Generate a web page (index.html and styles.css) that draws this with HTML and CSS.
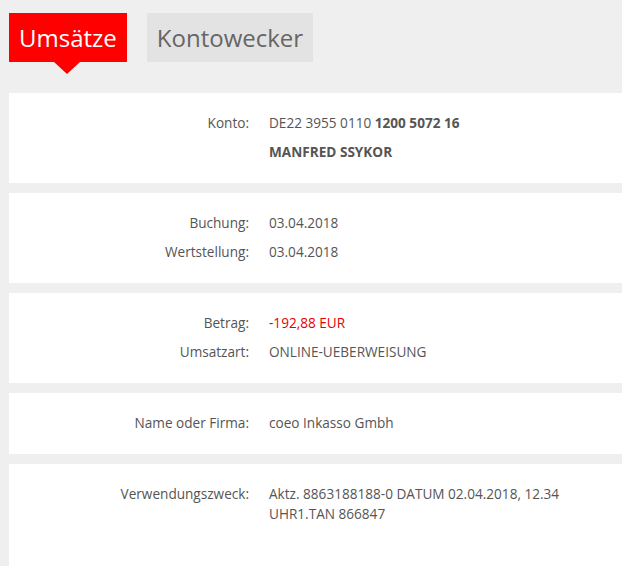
FILE: index.html
```html
<!DOCTYPE html>
<html lang="de">
  <head>
    <meta charset="UTF-8" />
    <title>Umsätze</title>
    <link rel="stylesheet" href="styles.css">
  </head>
  <body>
    <nav class="tabs">
      <a href="#" class="tab active">Umsätze</a>
      <a href="#" class="tab">Kontowecker</a>
    </nav>

    <div class="details">
      <section class="card">
        <div class="row">
          <span class="label">Konto:</span>
          <span class="value">DE22 3955 0110 <b>1200 5072 16</b></span>
        </div>
        <div class="row">
          <span class="label"></span>
          <span class="value"><b>MANFRED SSYKOR</b></span>
        </div>
      </section>

      <section class="card">
        <div class="row">
          <span class="label">Buchung:</span>
          <span class="value">03.04.2018</span>
        </div>
        <div class="row">
          <span class="label">Wertstellung:</span>
          <span class="value">03.04.2018</span>
        </div>
      </section>

      <section class="card">
        <div class="row">
          <span class="label">Betrag:</span>
          <span class="value negative">-192,88 EUR</span>
        </div>
        <div class="row">
          <span class="label">Umsatzart:</span>
          <span class="value">ONLINE-UEBERWEISUNG</span>
        </div>
      </section>

      <section class="card">
        <div class="row">
          <span class="label">Name oder Firma:</span>
          <span class="value">coeo Inkasso Gmbh</span>
        </div>
      </section>

      <section class="card last">
        <div class="row">
          <span class="label">Verwendungszweck:</span>
          <span class="value">Aktz. 8863188188-0 DATUM 02.04.2018, 12.34 UHR1.TAN 866847</span>
        </div>
      </section>
    </div>
  </body>
</html>
```

FILE: styles.css
```css
body {
  font-family: "Open Sans", "Liberation Sans", sans-serif;
  background-color: #efefef;
  margin: 0;
  padding: 13px 0 0 9px;
  color: #555;
  font-size: 13.6px;
}
.tabs {
  display: flex;
  gap: 20px;
}
.tab {
  position: relative;
  display: flex;
  align-items: center;
  height: 49px;
  padding: 0 10px;
  font-size: 24px;
  color: #666;
  background: #e3e3e3;
  text-decoration: none;
  box-sizing: border-box;
}
.tab.active {
  background: #ff0000;
  color: #fff;
}
/* little arrow under the active tab */
.tab.active::after {
  content: "";
  position: absolute;
  left: 45px;
  top: 49px;
  border-left: 13px solid transparent;
  border-right: 13px solid transparent;
  border-top: 12px solid #ff0000;
}
.details {
  margin-top: 31px;
}
.card {
  background: #fff;
  padding: 20px 0 21px;
  margin-bottom: 10px;
  display: flex;
  flex-direction: column;
  gap: 9px;
}
.card.last {
  padding-bottom: 60px;
}
.row {
  display: flex;
  gap: 20px;
  line-height: 20px;
}
.label {
  width: 240px;
  flex-shrink: 0;
  text-align: right;
}
.value {
  width: 320px;
}
.value b {
  font-weight: bold;
}
.negative {
  color: #e60000;
}
```
